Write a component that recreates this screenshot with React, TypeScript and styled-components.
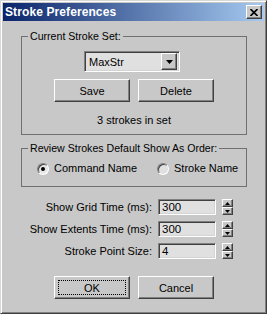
import React from "react";
import styled, { createGlobalStyle, css } from "styled-components";

const GlobalStyle = createGlobalStyle`
  html, body {
    margin: 0;
    padding: 0;
    background: #c8c8c8;
  }
  body {
    font-family: "Liberation Sans", Arial, sans-serif;
    font-size: 10.6px;
    color: #000;
  }
`;

const raised = css`
  background: #c8c8c8;
  border-top: 1px solid #fff;
  border-left: 1px solid #fff;
  border-right: 1px solid #404040;
  border-bottom: 1px solid #404040;
  box-shadow: inset -1px -1px #808080;
`;

const sunken = css`
  border-top: 1px solid #808080;
  border-left: 1px solid #808080;
  border-right: 1px solid #fff;
  border-bottom: 1px solid #fff;
  box-shadow: inset 1px 1px #404040, inset -1px -1px #d4d4d4;
`;

const Window = styled.div`
  box-sizing: border-box;
  width: 267px;
  height: 314px;
  background: #c8c8c8;
  border-top: 1px solid #d8d8d8;
  border-left: 1px solid #d8d8d8;
  border-right: 1px solid #404040;
  border-bottom: 1px solid #404040;
  box-shadow: inset 1px 1px #fff, inset -1px -1px #808080;
  padding: 2px;
  display: flex;
  flex-direction: column;
`;

const TitleBar = styled.div`
  height: 18px;
  display: flex;
  align-items: center;
  justify-content: space-between;
  padding: 0 2px 0 2px;
  background: linear-gradient(to right, #0a246a, #a6caf0);
`;

const Title = styled.span`
  color: #fff;
  font-weight: bold;
  font-size: 12px;
  letter-spacing: 0.1px;
`;

const CloseButton = styled.div`
  ${raised};
  box-sizing: border-box;
  width: 16px;
  height: 14px;
  display: flex;
  align-items: center;
  justify-content: center;
`;

const Body = styled.div`
  display: flex;
  flex-direction: column;
  padding: 0 17px 0 18px;
`;

const Group = styled.fieldset<{ $top: number; $pad: string }>`
  margin: ${(p) => p.$top}px 0 0 0;
  padding: ${(p) => p.$pad};
  border: 1px solid #707070;
  min-width: 0;
`;

const Legend = styled.legend`
  margin-left: 6px;
  padding: 0 2px 0 2px;
  line-height: 13px;
`;

const ComboRow = styled.div`
  display: flex;
  padding-left: 62px;
`;

const Combo = styled.div`
  ${sunken};
  box-sizing: border-box;
  width: 96px;
  height: 21px;
  background: #e0e0e0;
  display: flex;
  align-items: center;
  justify-content: space-between;
  padding: 0 2px 0 4px;
  font-size: 11px;
`;

const ComboArrow = styled.div`
  ${raised};
  box-sizing: border-box;
  width: 16px;
  height: 17px;
  display: flex;
  align-items: center;
  justify-content: center;
`;

const ButtonRow = styled.div<{ $top: number }>`
  display: flex;
  justify-content: center;
  gap: 8px;
  margin-top: ${(p) => p.$top}px;
`;

const Button = styled.div<{ $focus?: boolean }>`
  ${raised};
  box-sizing: border-box;
  width: 76px;
  height: 23px;
  display: flex;
  align-items: center;
  justify-content: center;
  position: relative;
  font-size: 11px;
  ${(p) =>
    p.$focus &&
    css`
      &::after {
        content: "";
        position: absolute;
        inset: 3px;
        border: 1px dotted #000;
      }
    `}
`;

const Note = styled.div`
  text-align: center;
  margin-top: 12px;
  line-height: 13px;
  font-size: 11px;
`;

const RadioRow = styled.div`
  display: flex;
  align-items: center;
  padding-left: 15px;
  line-height: 13px;
  font-size: 11px;
`;

const RadioItem = styled.label<{ $width?: number }>`
  display: flex;
  align-items: center;
  gap: 5px;
  width: ${(p) => (p.$width ? `${p.$width}px` : "auto")};
`;

const RadioCircle = styled.span<{ $checked?: boolean }>`
  box-sizing: border-box;
  width: 12px;
  height: 12px;
  border-radius: 50%;
  border-top: 1px solid #808080;
  border-left: 1px solid #808080;
  border-right: 1px solid #fff;
  border-bottom: 1px solid #fff;
  box-shadow: inset 1px 1px #404040;
  background: ${(p) => (p.$checked ? "#e8e8e8" : "#e0e0e0")};
  display: flex;
  align-items: center;
  justify-content: center;
  &::after {
    content: "";
    display: ${(p) => (p.$checked ? "block" : "none")};
    width: 4px;
    height: 4px;
    border-radius: 50%;
    background: #000;
  }
`;

const Fields = styled.div`
  display: grid;
  grid-template-columns: 1fr 58px 11px;
  column-gap: 6px;
  row-gap: 6px;
  align-items: center;
  margin-top: 12px;
  padding-right: 14px;
  font-size: 11px;
`;

const FieldLabel = styled.span`
  text-align: right;
`;

const Field = styled.div`
  ${sunken};
  box-sizing: border-box;
  height: 16px;
  background: #e0e0e0;
  padding: 0 3px;
  display: flex;
  align-items: center;
  font-size: 11.5px;
`;

const Spinner = styled.div`
  display: flex;
  flex-direction: column;
  height: 16px;
`;

const SpinHalf = styled.div`
  ${raised};
  box-sizing: border-box;
  height: 8px;
  display: flex;
  align-items: center;
  justify-content: center;
`;

const Arrow = ({ down, w = 7 }: { down?: boolean; w?: number }) => {
  const h = Math.ceil(w / 2);
  return (
    <svg width={w} height={h} viewBox={`0 0 ${w} ${h}`}>
      <polygon
        points={down ? `0,0 ${w},0 ${w / 2},${h}` : `0,${h} ${w},${h} ${w / 2},0`}
        fill="#000"
      />
    </svg>
  );
};

const SpinField = ({ label, value }: { label: string; value: string }) => (
  <>
    <FieldLabel>{label}</FieldLabel>
    <Field>{value}</Field>
    <Spinner>
      <SpinHalf>
        <Arrow w={5} />
      </SpinHalf>
      <SpinHalf>
        <Arrow down w={5} />
      </SpinHalf>
    </Spinner>
  </>
);

export default function App() {
  return (
    <>
      <GlobalStyle />
      <Window>
        <TitleBar>
          <Title>Stroke Preferences</Title>
          <CloseButton>
            <svg width="8" height="7" viewBox="0 0 8 7">
              <path d="M0.5 0 L7.5 7 M7.5 0 L0.5 7" stroke="#000" strokeWidth="1.6" />
            </svg>
          </CloseButton>
        </TitleBar>
        <Body>
          <Group $top={9} $pad="8px 0 7px 0">
            <Legend>Current Stroke Set:</Legend>
            <ComboRow>
              <Combo>
                <span>MaxStr</span>
                <ComboArrow>
                  <Arrow down />
                </ComboArrow>
              </Combo>
            </ComboRow>
            <ButtonRow $top={7}>
              <Button>Save</Button>
              <Button>Delete</Button>
            </ButtonRow>
            <Note>3 strokes in set</Note>
          </Group>
          <Group $top={7} $pad="7px 0 11px 0">
            <Legend>Review Strokes Default Show As Order:</Legend>
            <RadioRow>
              <RadioItem $width={120}>
                <RadioCircle $checked />
                Command Name
              </RadioItem>
              <RadioItem>
                <RadioCircle />
                Stroke Name
              </RadioItem>
            </RadioRow>
          </Group>
          <Fields>
            <SpinField label="Show Grid Time (ms):" value="300" />
            <SpinField label="Show Extents Time (ms):" value="300" />
            <SpinField label="Stroke Point Size:" value="4" />
          </Fields>
          <ButtonRow $top={17}>
            <Button $focus>OK</Button>
            <Button>Cancel</Button>
          </ButtonRow>
        </Body>
      </Window>
    </>
  );
}
